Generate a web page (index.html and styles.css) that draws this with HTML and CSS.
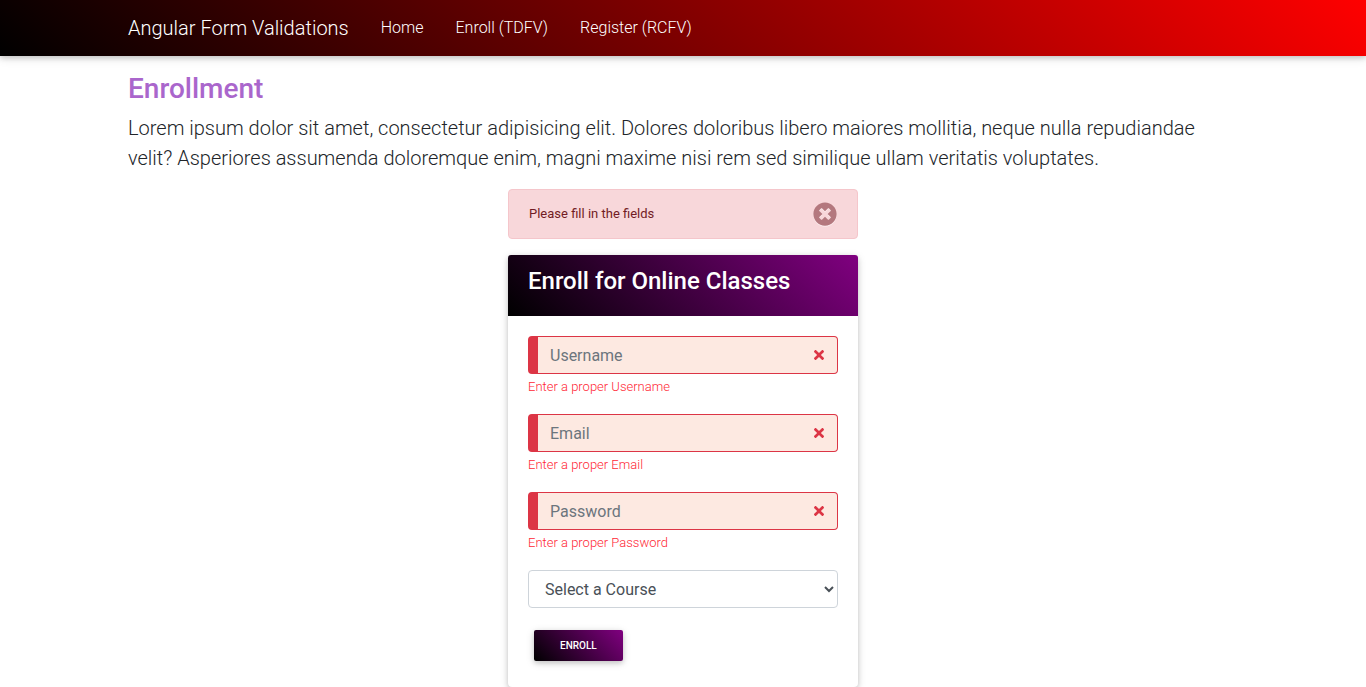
FILE: index.html
```html
<!DOCTYPE html>
<html lang="en">
<head>
<meta charset="utf-8">
<meta name="viewport" content="width=device-width, initial-scale=1">
<title>Angular Form Validations</title>
<link rel="stylesheet" href="styles.css">
</head>
<body>
<svg class="sprite" aria-hidden="true">
  <symbol id="times" viewBox="0 80 352 352"><path d="M242.72 256l100.07-100.07c12.28-12.28 12.28-32.19 0-44.48l-22.24-22.24c-12.28-12.28-32.19-12.28-44.48 0L176 189.28 75.93 89.21c-12.28-12.28-32.19-12.28-44.48 0L9.21 111.45c-12.28 12.28-12.28 32.19 0 44.48L109.28 256 9.21 356.07c-12.28 12.28-12.28 32.19 0 44.48l22.24 22.24c12.28 12.28 32.2 12.28 44.48 0L176 322.72l100.07 100.07c12.28 12.28 32.2 12.28 44.48 0l22.24-22.24c12.28-12.28 12.28-32.19 0-44.48L242.72 256z"/></symbol>
</svg>
<nav class="navbar">
  <div class="container navbar-inner">
    <a class="brand" href="#">Angular Form Validations</a>
    <a class="nav-link" href="#">Home</a>
    <a class="nav-link" href="#">Enroll (TDFV)</a>
    <a class="nav-link" href="#">Register (RCFV)</a>
  </div>
</nav>
<main class="container">
  <h1 class="page-title">Enrollment</h1>
  <p class="lead">Lorem ipsum dolor sit amet, consectetur adipisicing elit. Dolores doloribus libero maiores mollitia, neque nulla repudiandae velit? Asperiores assumenda doloremque enim, magni maxime nisi rem sed similique ullam veritatis voluptates.</p>
  <div class="column">
    <div class="alert" role="alert">
      <span>Please fill in the fields</span>
      <button class="close" type="button" aria-label="Close">
        <svg viewBox="0 0 512 512" aria-hidden="true"><path d="M256 8C119 8 8 119 8 256s111 248 248 248 248-111 248-248S393 8 256 8zm121.600 313.100c4.700 4.700 4.700 12.300 0 17L338 377.600c-4.700 4.700-12.300 4.700-17 0L256 312l-65.100 65.600c-4.700 4.700-12.300 4.700-17 0L134.400 338c-4.700-4.700-4.700-12.300 0-17l65.600-65-65.600-65.100c-4.700-4.700-4.700-12.300 0-17l39.600-39.600c4.700-4.700 12.300-4.700 17 0l65 65.700 65.100-65.600c4.700-4.700 12.300-4.700 17 0l39.600 39.600c4.700 4.700 4.700 12.300 0 17L312 256l65.600 65.100z"/></svg>
      </button>
    </div>
    <section class="card">
      <header class="card-header"><h2 class="card-title">Enroll for Online Classes</h2></header>
      <form class="card-body">
        <div class="group">
          <div class="field">
            <input class="input" type="text" placeholder="Username" aria-label="Username" aria-describedby="username-error">
            <svg class="mark" aria-hidden="true"><use href="#times"/></svg>
          </div>
          <small class="error" id="username-error">Enter a proper Username</small>
        </div>
        <div class="group">
          <div class="field">
            <input class="input" type="email" placeholder="Email" aria-label="Email" aria-describedby="email-error">
            <svg class="mark" aria-hidden="true"><use href="#times"/></svg>
          </div>
          <small class="error" id="email-error">Enter a proper Email</small>
        </div>
        <div class="group">
          <div class="field">
            <input class="input" type="password" placeholder="Password" aria-label="Password" aria-describedby="password-error">
            <svg class="mark" aria-hidden="true"><use href="#times"/></svg>
          </div>
          <small class="error" id="password-error">Enter a proper Password</small>
        </div>
        <select class="select" aria-label="Course"><option>Select a Course</option></select>
        <button class="submit" type="submit">Enroll</button>
      </form>
    </section>
  </div>
</main>
</body>
</html>
```
FILE: styles.css
```css
*, *::before, *::after { box-sizing: border-box; }
body {
  margin: 0;
  background: #fff;
  color: #212529;
  font: 300 16px/24px Roboto, "Liberation Sans", sans-serif;
}
.sprite { display: none; }
.container { max-width: 1140px; margin: 0 auto; padding: 0 15px; }
.navbar {
  background: linear-gradient(45deg, black, red);
  box-shadow: 0 2px 5px rgba(0, 0, 0, .16), 0 2px 10px rgba(0, 0, 0, .12);
}
.navbar-inner { display: flex; align-items: center; min-height: 56px; }
.brand, .nav-link { color: #fff; text-decoration: none; }
.brand { margin-right: 16px; font-size: 20px; line-height: 30px; }
.nav-link { padding: 8px 16px; }
.page-title {
  margin: 16px 0 8px;
  color: #a6c;
  font-size: 28px;
  font-weight: 500;
  line-height: 33px;
}
.lead { margin: 0 0 16px; font-size: 20px; line-height: 30px; }
.column { max-width: 350px; margin: 0 auto; }
.alert {
  display: flex;
  align-items: center;
  justify-content: space-between;
  margin-bottom: 16px;
  padding: 11px 20px;
  border: 1px solid #f5c6cb;
  border-radius: 4px;
  background: #f8d7da;
  color: #721c24;
  font-size: 13px;
  font-weight: 400;
  line-height: 26px;
}
.close {
  display: flex;
  padding: 0;
  border: 0;
  background: none;
  color: inherit;
  opacity: .5;
}
.close svg { width: 24px; height: 24px; fill: currentColor; filter: drop-shadow(0 1px 0 #fff); }
.card {
  border-radius: 4px;
  background: #fff;
  box-shadow: 0 2px 5px rgba(0, 0, 0, .16), 0 2px 10px rgba(0, 0, 0, .12);
}
.card-header {
  padding: 12px 20px 20px;
  border-radius: 3px 3px 0 0;
  background: linear-gradient(45deg, black, purple);
}
.card-title { margin: 0; color: #fff; font-size: 24px; font-weight: 500; line-height: 29px; }
.card-body { padding: 20px; }
.group { margin-bottom: 14px; }
.field { position: relative; }
.input, .select {
  display: block;
  width: 100%;
  height: 38px;
  border: 1px solid #ced4da;
  border-radius: 4px;
  background: #fff;
  color: #495057;
  font: 400 16px/24px Roboto, "Liberation Sans", sans-serif;
}
.input {
  padding: 6px 36px 6px 12px;
  border-color: #dc3545;
  border-left-width: 10px;
  background: #fde9e1;
}
.input::placeholder { color: #6c757d; opacity: 1; }
.mark {
  position: absolute;
  top: 50%;
  right: 14px;
  width: 10px;
  height: 10px;
  margin-top: -5px;
  fill: #dc3545;
}
.error { display: block; color: #ff1f35; font-size: 13px; line-height: 26px; }
.select { margin-bottom: 16px; padding: 6px 12px; }
.submit {
  display: block;
  margin: 22px 6px 6px;
  padding: 8px 26px;
  border: 0;
  border-radius: 2px;
  background: linear-gradient(45deg, black, purple);
  box-shadow: 0 2px 5px rgba(0, 0, 0, .16), 0 2px 10px rgba(0, 0, 0, .12);
  color: #fff;
  font: 500 10px/15px Roboto, "Liberation Sans", sans-serif;
  text-transform: uppercase;
}
```
